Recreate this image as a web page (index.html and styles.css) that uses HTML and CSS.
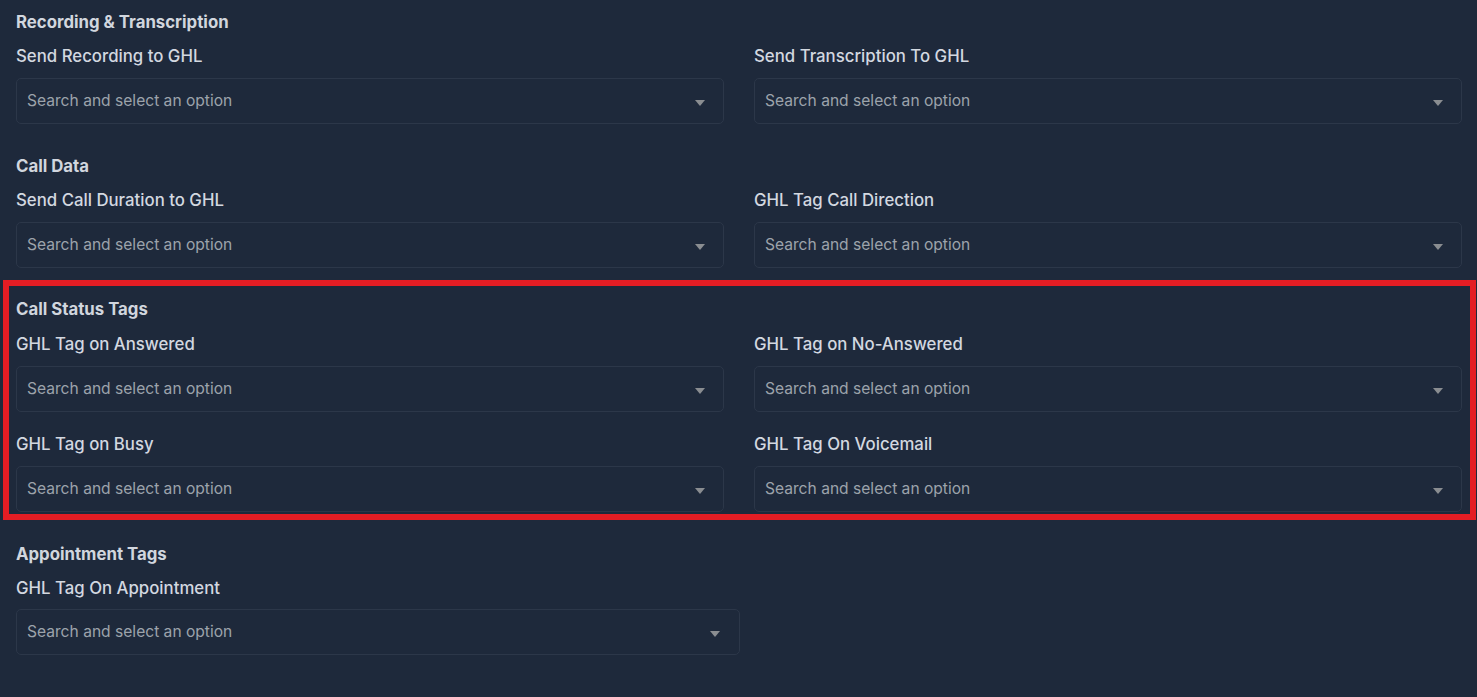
FILE: index.html
```html
<!DOCTYPE html>
<html lang="en">
<head>
<meta charset="utf-8">
<title>GHL Settings</title>
<link rel="stylesheet" href="styles.css">
</head>
<body>
<div class="page">
  <section class="section">
    <h3 class="section-title">Recording &amp; Transcription</h3>
    <div class="grid">
      <div class="field">
        <label class="label">Send Recording to GHL</label>
        <div class="select"><span class="placeholder">Search and select an option</span><span class="arrow"></span></div>
      </div>
      <div class="field">
        <label class="label">Send Transcription To GHL</label>
        <div class="select"><span class="placeholder">Search and select an option</span><span class="arrow"></span></div>
      </div>
    </div>
  </section>

  <section class="section">
    <h3 class="section-title">Call Data</h3>
    <div class="grid">
      <div class="field">
        <label class="label">Send Call Duration to GHL</label>
        <div class="select"><span class="placeholder">Search and select an option</span><span class="arrow"></span></div>
      </div>
      <div class="field">
        <label class="label">GHL Tag Call Direction</label>
        <div class="select"><span class="placeholder">Search and select an option</span><span class="arrow"></span></div>
      </div>
    </div>
  </section>

  <section class="section highlight">
    <h3 class="section-title">Call Status Tags</h3>
    <div class="grid">
      <div class="field">
        <label class="label">GHL Tag on Answered</label>
        <div class="select"><span class="placeholder">Search and select an option</span><span class="arrow"></span></div>
      </div>
      <div class="field">
        <label class="label">GHL Tag on No-Answered</label>
        <div class="select"><span class="placeholder">Search and select an option</span><span class="arrow"></span></div>
      </div>
      <div class="field">
        <label class="label">GHL Tag on Busy</label>
        <div class="select"><span class="placeholder">Search and select an option</span><span class="arrow"></span></div>
      </div>
      <div class="field">
        <label class="label">GHL Tag On Voicemail</label>
        <div class="select"><span class="placeholder">Search and select an option</span><span class="arrow"></span></div>
      </div>
    </div>
  </section>

  <section class="section appointment">
    <h3 class="section-title">Appointment Tags</h3>
    <div class="field single">
      <label class="label">GHL Tag On Appointment</label>
      <div class="select"><span class="placeholder">Search and select an option</span><span class="arrow"></span></div>
    </div>
  </section>
</div>
</body>
</html>
```

FILE: styles.css
```css
* { box-sizing: border-box; }

html, body {
  margin: 0;
  padding: 0;
  background: #1e293b;
}

body {
  font-family: Inter, "Noto Sans", "Liberation Sans", sans-serif;
  color: #d3d8e0;
  height: 697px;
  overflow: hidden;
}

.page {
  padding: 9px 15px 0 16px;
}

.section {
  margin-bottom: 29px;
}

.section-title {
  margin: 0 0 9px 0;
  padding-top: 1px;
  font-size: 16.8px;
  line-height: 24px;
  font-weight: 700;
  color: #d1d6de;
}

.grid {
  display: grid;
  grid-template-columns: 1fr 1fr;
  column-gap: 30px;
  row-gap: 19px;
}

.field {
  display: flex;
  flex-direction: column;
}

.label {
  display: block;
  padding-top: 1px;
  font-size: 16.8px;
  line-height: 24px;
  font-weight: 500;
  color: #d3d8e0;
  margin-bottom: 10px;
}

.select {
  position: relative;
  height: 46px;
  border: 1px solid #2c3749;
  border-radius: 5px;
  background: #1e293b;
  display: flex;
  align-items: center;
  padding: 0 10px;
}

.placeholder {
  font-size: 15.6px;
  color: #9ca3ab;
  line-height: 20px;
}

.arrow {
  position: absolute;
  right: 18px;
  top: 21px;
  width: 0;
  height: 0;
  border-left: 5px solid transparent;
  border-right: 5px solid transparent;
  border-top: 6px solid #8a8d91;
}

.section:nth-child(2) {
  margin-bottom: 12px;
}

.highlight {
  margin: 0 -14px 21px -13px;
  border: 6px solid #e41d24;
  padding: 10px 8px 2px 7px;
}

.highlight .section-title {
  margin-bottom: 10px;
}

.single {
  width: 724px;
}

.single .label {
  margin-bottom: 9px;
}

.single .arrow {
  right: 19px;
}
```
